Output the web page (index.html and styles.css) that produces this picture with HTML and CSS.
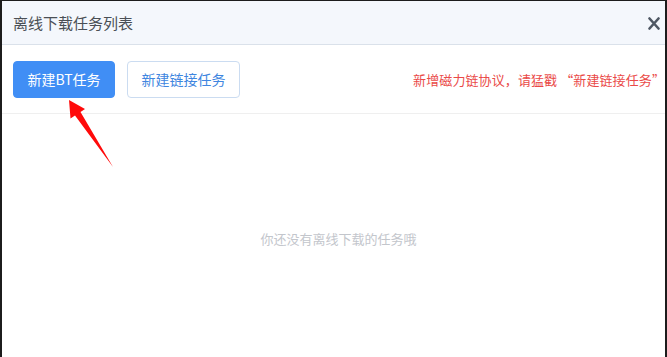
FILE: index.html
```html
<!DOCTYPE html>
<html lang="zh-CN">
  <head>
    <meta charset="UTF-8" />
    <meta name="viewport" content="width=device-width, initial-scale=1.0" />
    <title>离线下载任务列表</title>
    <link rel="stylesheet" href="styles.css">
  </head>
  <body>
    <div class="dialog">
      <div class="header">
        <span class="title">离线下载任务列表</span>
        <svg class="close-btn" width="12" height="13" viewBox="0 0 12 13">
          <path d="M1.5 1.5 L10.5 11.5 M10.5 1.5 L1.5 11.5" stroke="#4f5864" stroke-width="2.6" stroke-linecap="round" />
        </svg>
      </div>
      <div class="toolbar">
        <button class="btn btn-primary">新建BT任务</button>
        <button class="btn btn-plain">新建链接任务</button>
        <span class="notice">新增磁力链协议，请猛戳 “新建链接任务”</span>
      </div>
      <div class="empty">
        <p>你还没有离线下载的任务哦</p>
      </div>
      <!-- annotation arrow -->
      <svg class="arrow" width="667" height="357" viewBox="0 0 667 357">
        <polygon points="69,100 85,109 80.5,112 113,167 75,115.5 70.5,118.5" fill="#ff0a0a" />
      </svg>
    </div>
  </body>
</html>
```

FILE: styles.css
```css
* {
  box-sizing: border-box;
  font-family: "Noto Sans CJK SC", "Noto Sans", sans-serif;
}
body {
  margin: 0;
  background: #ffffff;
  overflow: hidden;
}
.dialog {
  position: relative;
  height: 100vh;
  border-top: 1px solid #1c1c1c;
  border-left: 2px solid #1c1c1c;
  border-right: 2px solid #1c1c1c;
  background: #ffffff;
}
.header {
  height: 44px;
  display: flex;
  align-items: center;
  justify-content: space-between;
  padding: 0 5px 0 11px;
  background: #f4f7fc;
  border-bottom: 1px solid #dae1ea;
}
.title {
  font-size: 15px;
  color: #4a4f55;
}
.close-btn {
  margin-top: 1px;
}
.toolbar {
  display: flex;
  align-items: center;
  gap: 12px;
  height: 69px;
  padding: 0 0 0 11px;
  border-bottom: 1px solid #efefef;
}
.btn {
  height: 37px;
  border-radius: 4px;
  font-size: 14px;
  padding: 0;
  cursor: pointer;
}
.btn-primary {
  width: 102px;
  background: #408ef5;
  border: 1px solid #408ef5;
  color: #ffffff;
}
.btn-plain {
  width: 113px;
  background: #ffffff;
  border: 1px solid #cbdcf1;
  color: #3f86e0;
}
.notice {
  margin-left: auto;
  font-size: 13px;
  letter-spacing: 0.1px;
  color: #ea4a48;
  white-space: nowrap;
}
.empty {
  height: 248px;
  display: flex;
  align-items: center;
  justify-content: center;
  padding-left: 10px;
}
.empty p {
  margin: 0;
  font-size: 13px;
  color: #c3c6cc;
}
.arrow {
  position: absolute;
  left: -2px;
  top: -1px;
  pointer-events: none;
}
```
